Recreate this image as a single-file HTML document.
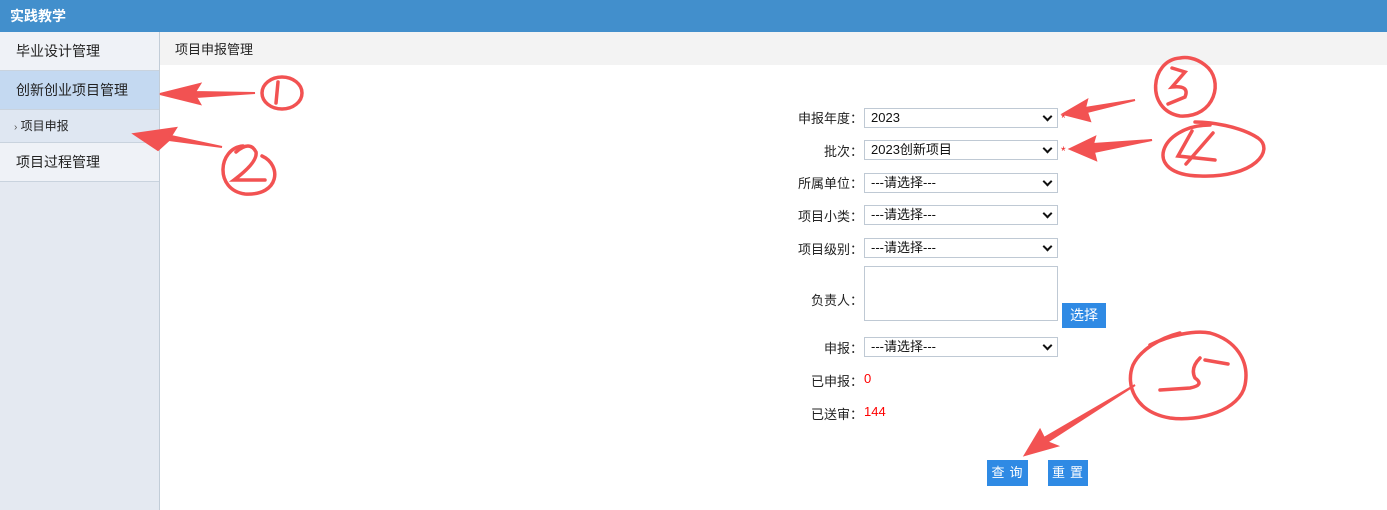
<!DOCTYPE html>
<html><head><meta charset="utf-8"><style>
*{margin:0;padding:0;box-sizing:border-box}
body{width:1387px;height:510px;position:relative;overflow:hidden;background:#fff;font-family:"Liberation Sans","Noto Sans CJK SC",sans-serif;font-size:13px;color:#222}
.a{position:absolute}
.hdr{left:0;top:0;width:1387px;height:32px;background:#428fcc;color:#fff;font-weight:bold;font-size:14px;line-height:32px;padding-left:10px}
.side{left:0;top:32px;width:160px;height:478px;background:#e4e9f1;border-right:1px solid #c2cdd8}
.it{position:absolute;left:0;width:159px;border-bottom:1px solid #c9d3de;padding-left:16px;font-size:14px}
.sel{left:864px;width:194px;height:20px;border:1px solid #bfc9d4;background:#fff;font-size:13px;line-height:18px;padding-left:6px;color:#111}
.sel:after{content:"";position:absolute;right:6px;top:4px;width:5px;height:5px;border-right:2px solid #111;border-bottom:2px solid #111;transform:rotate(45deg)}
.lb{width:88px;text-align:right;left:775px;font-size:13px}
.btn{background:#2f8ae4;color:#fff;text-align:center;font-size:13px}
.star{color:#e22;font-size:12px}
</style></head><body>
<div class="a hdr">实践教学</div>
<div class="a side">
<div class="it" style="top:0;height:39px;line-height:38px;background:#eff2f7">毕业设计管理</div>
<div class="it" style="top:39px;height:39px;line-height:38px;background:#c4d9f1">创新创业项目管理</div>
<div class="it" style="top:78px;height:33px;line-height:32px;background:#dfe7f2;font-size:12px;padding-left:14px"><span style="color:#555;font-size:10px">&#x203A;</span> 项目申报</div>
<div class="it" style="top:111px;height:39px;line-height:38px;background:#eff2f7">项目过程管理</div>
</div>
<div class="a" style="left:160px;top:32px;width:1227px;height:33px;background:#f3f3f3;line-height:36px;padding-left:15px;font-size:13px">项目申报管理</div>

<div class="a lb" style="top:108px">申报年度：</div><div class="a sel" style="top:108px">2023</div><div class="a star" style="left:1061px;top:111px">*</div>
<div class="a lb" style="top:141px">批次：</div><div class="a sel" style="top:140px">2023创新项目</div><div class="a star" style="left:1061px;top:144px">*</div>
<div class="a lb" style="top:173px">所属单位：</div><div class="a sel" style="top:173px">---请选择---</div>
<div class="a lb" style="top:206px">项目小类：</div><div class="a sel" style="top:205px">---请选择---</div>
<div class="a lb" style="top:239px">项目级别：</div><div class="a sel" style="top:238px">---请选择---</div>
<div class="a lb" style="top:290px">负责人：</div><div class="a" style="left:864px;top:266px;width:194px;height:55px;border:1px solid #bfc9d4"></div>
<div class="a btn" style="left:1062px;top:303px;width:44px;height:25px;line-height:25px;font-size:14px">选择</div>
<div class="a lb" style="top:338px">申报：</div><div class="a sel" style="top:337px">---请选择---</div>
<div class="a lb" style="top:371px">已申报：</div><div class="a" style="left:864px;top:371px;color:#f00">0</div>
<div class="a lb" style="top:404px">已送审：</div><div class="a" style="left:864px;top:404px;color:#f00">144</div>
<div class="a btn" style="left:987px;top:460px;width:41px;height:26px;line-height:26px;letter-spacing:5px;padding-left:4px">查询</div>
<div class="a btn" style="left:1048px;top:460px;width:40px;height:26px;line-height:26px;letter-spacing:5px;padding-left:4px">重置</div>

<svg class="a" style="left:0;top:0" width="1387" height="510" fill="none" stroke="#f25252" stroke-width="3.5" stroke-linecap="round">
<g fill="#f25252" stroke-width="2">
<path d="M160 94 L200 84 L195 92 L255 93 L196 97 L200 104 Z"/>
<path d="M134 134 L176 128 L171 136 L222 147 L169 140 L158 150 Z"/>
<path d="M1063 114 L1087 100 L1085 108 L1135 100 L1087 112 L1090 121 Z"/>
<path d="M1070 149 L1095 137 L1093 144 L1152 140 L1094 152 L1096 160 Z"/>
<path d="M1025 455 L1040 430 L1044 438 L1135 385 L1047 442 L1057 446 Z"/>
</g>
<ellipse cx="282" cy="93" rx="20" ry="16"/>
<path d="M278 82 L276 103"/>
<path d="M236 152 Q250 140 256 152 Q258 162 234 180 L265 180"/>
<path d="M243 146 C218 148 214 190 245 194 C280 196 282 165 262 156"/>
<path d="M1180 58 C1150 60 1145 110 1180 116 C1215 118 1225 80 1205 65 C1195 57 1185 57 1180 58"/>
<path d="M1172 68 L1185 72 L1172 87 Q1190 85 1185 97 L1168 104"/>
<path d="M1210 125 C1160 125 1140 175 1200 176 C1255 178 1275 150 1258 138 C1240 126 1210 122 1195 122"/>
<path d="M1192 131 L1178 156 L1215 160 M1213 133 L1186 164"/>
<path d="M1150 345 C1170 335 1195 330 1210 333 C1235 340 1250 360 1245 385 C1240 410 1200 422 1170 418 C1135 412 1125 385 1133 365 C1140 350 1160 338 1180 333"/>
<path d="M1200 358 Q1190 368 1195 378 Q1205 385 1190 388 L1160 390 M1205 360 L1228 364"/>
</svg>
</body></html>
